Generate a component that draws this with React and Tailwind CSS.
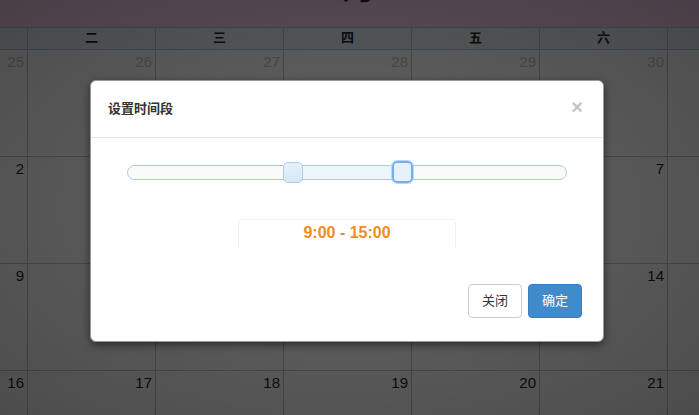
const weekdays = ["一", "二", "三", "四", "五", "六", "日"]

const weeks = [
  [25, 26, 27, 28, 29, 30, 1],
  [2, 3, 4, 5, 6, 7, 8],
  [9, 10, 11, 12, 13, 14, 15],
  [16, 17, 18, 19, 20, 21, 22],
]

function Calendar() {
  return (
    <div className="w-[699px] h-[415px] overflow-hidden bg-white">
      {/* title bar, mostly scrolled out of view */}
      <div className="h-[27px] bg-[#f4d2ee] flex justify-center overflow-hidden">
        <div className="-mt-[31px] text-[34px] font-bold text-[#222] leading-[36px] tracking-[12px]">7月</div>
      </div>
      <div className="-ml-[100px] w-[896px]">
        <div className="grid grid-cols-7 h-[23px] bg-[#e4f1fa] border-y border-[#b8c6d2]">
          {weekdays.map((d) => (
            <div key={d} className="border-r border-[#b8c6d2] text-center text-[13px] font-bold text-[#222] leading-[20px]">{d}</div>
          ))}
        </div>
        {weeks.map((w, i) => (
          <div key={i} className="grid grid-cols-7 h-[107px] border-b border-[#c4c4c4]">
            {w.map((n, j) => (
              <div key={j} className={`border-r border-[#c4c4c4] text-right pr-[3px] pt-[2px] text-[15px] leading-[20px] ${i === 0 && n > 20 ? "text-[#c8c8c8]" : "text-[#1e1e1e]"}`}>
                {n}
              </div>
            ))}
          </div>
        ))}
      </div>
    </div>
  )
}

function RangeSlider() {
  return (
    <div className="relative mx-[36px] h-[21px]">
      <div className="absolute left-0 right-0 top-[4px] h-[15px] rounded-full border border-[#a9cbe8] bg-[#fafafa]"></div>
      <div className="absolute left-[166px] w-[110px] top-[5px] h-[13px] bg-[#eef6fd]"></div>
      <div className="absolute left-[156px] top-[1px] w-[20px] h-[21px] rounded-[5px] border border-[#aecde9] bg-gradient-to-b from-[#e6f1fb] to-[#d6e8f8]"></div>
      <div className="absolute left-[265px] top-0 w-[21px] h-[22px] rounded-[5px] border-2 border-[#79aeec] outline outline-1 outline-[#bcd8f7] bg-[#e6f1fb]"></div>
    </div>
  )
}

function Modal() {
  return (
    <div className="w-[514px] bg-white rounded-[6px] border border-[#999] shadow-[0_3px_9px_rgba(0,0,0,0.5)]">
      <div className="h-[57px] border-b border-[#e5e5e5] flex items-center justify-between pl-[17px] pr-[20px]">
        <div className="text-[13px] font-bold text-[#333]">设置时间段</div>
        <div className="text-[20px] font-bold text-[#c4c4c4] leading-none -mt-[4px]">×</div>
      </div>
      <div className="pt-[23px]">
        <RangeSlider />
        <div className="mt-[37px] mx-auto w-[218px] h-[29px] rounded-t-[4px] border border-b-0 border-[#f1f1f1] text-center text-[16px] font-bold text-[#f28c1e] leading-[26px]" style={{ fontFamily: '"Liberation Sans", Arial, sans-serif' }}>
          9:00 - 15:00
        </div>
      </div>
      <div className="flex justify-end gap-[6px] pt-[36px] pb-[23px] pr-[21px]">
        <button className="w-[54px] h-[34px] rounded-[4px] border border-[#ccc] bg-white text-[13px] text-[#333]">关闭</button>
        <button className="w-[54px] h-[34px] rounded-[4px] border border-[#3a7fc0] bg-[#428bca] text-[13px] text-white">确定</button>
      </div>
    </div>
  )
}

export default function App() {
  return (
    <div className="relative w-[699px] h-[415px] overflow-hidden" style={{ fontFamily: '"Liberation Sans", "Noto Sans CJK SC", sans-serif' }}>
      <Calendar />
      <div className="absolute inset-0 bg-[radial-gradient(ellipse_at_center,rgba(0,0,0,0.6)_0%,rgba(0,0,0,0.7)_100%)]"></div>
      <div className="absolute left-[90px] top-[80px]">
        <Modal />
      </div>
    </div>
  )
}
